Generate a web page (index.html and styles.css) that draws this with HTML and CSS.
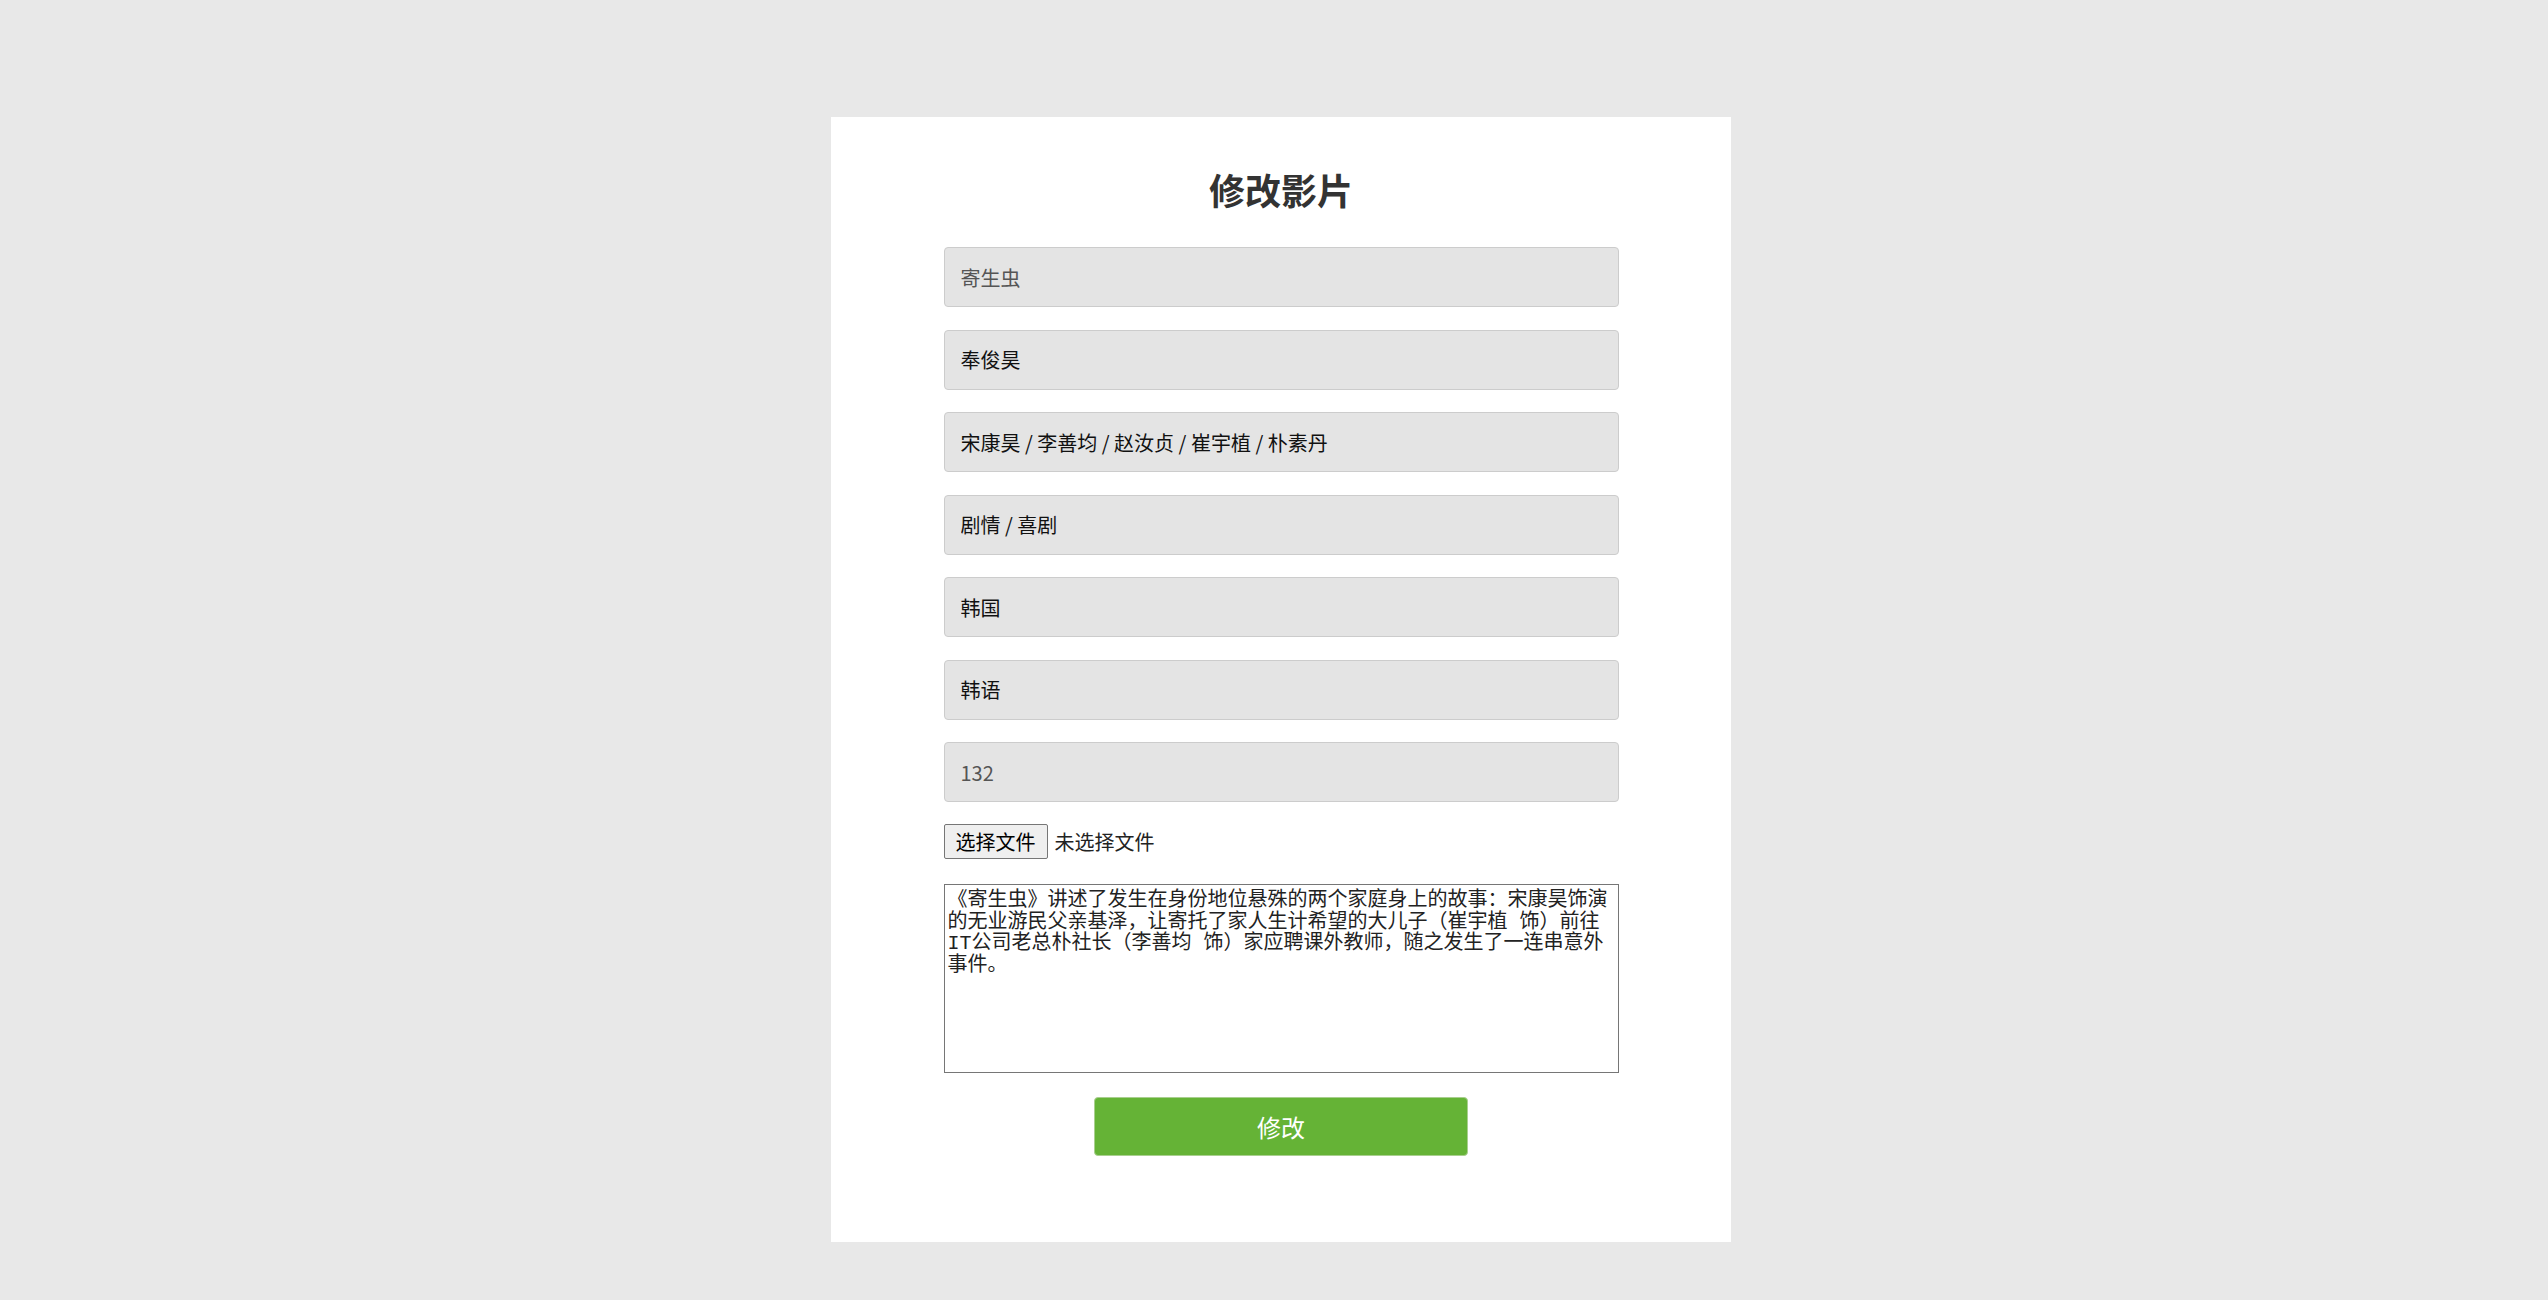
FILE: index.html
```html
<!DOCTYPE html>
<html lang="zh-CN">
<head>
<meta charset="utf-8">
<title>修改影片</title>
<link rel="stylesheet" href="styles.css">
</head>
<body>
<div class="card">
  <h1 class="title">修改影片</h1>
  <form class="form">
    <input class="field muted" type="text" value="寄生虫">
    <input class="field" type="text" value="奉俊昊">
    <input class="field" type="text" value="宋康昊 / 李善均 / 赵汝贞 / 崔宇植 / 朴素丹">
    <input class="field" type="text" value="剧情 / 喜剧">
    <input class="field" type="text" value="韩国">
    <input class="field" type="text" value="韩语">
    <input class="field muted" type="text" value="132">
    <div class="file-row">
      <button class="file-btn" type="button">选择文件</button>
      <span class="file-name">未选择文件</span>
    </div>
    <textarea class="desc">《寄生虫》讲述了发生在身份地位悬殊的两个家庭身上的故事：宋康昊饰演的无业游民父亲基泽，让寄托了家人生计希望的大儿子（崔宇植 饰）前往IT公司老总朴社长（李善均 饰）家应聘课外教师，随之发生了一连串意外事件。</textarea>
    <button class="submit" type="button">修改</button>
  </form>
</div>
</body>
</html>
```

FILE: styles.css
```css
html, body {
  margin: 0;
  padding: 0;
}

body {
  background: #e8e8e8;
  font-family: "Noto Sans CJK SC", "Noto Sans", sans-serif;
  height: 1300px;
  overflow: hidden;
  padding-left: 14px;
  box-sizing: border-box;
}

.card {
  width: 900px;
  height: 1125px;
  box-sizing: border-box;
  margin: 117px auto 0;
  background: #ffffff;
  padding-top: 45px;
}

.title {
  margin: 0 0 31px;
  font-size: 36px;
  line-height: 54px;
  font-weight: 700;
  color: #333333;
  text-align: center;
}

.form {
  width: 675px;
  margin: 0 auto;
  display: flex;
  flex-direction: column;
}

.field {
  display: block;
  width: 100%;
  height: 60px;
  box-sizing: border-box;
  margin: 0 0 22.5px;
  padding: 0 16px;
  border: 1px solid #cccccc;
  border-radius: 4px;
  background: #e4e4e4;
  font-family: "Noto Sans CJK SC", "Noto Sans", sans-serif;
  font-size: 20px;
  color: #111111;
  outline: none;
}

.field.muted {
  color: #555555;
}

.file-row {
  display: flex;
  align-items: center;
  gap: 7px;
  height: 35px;
  margin-top: -0.5px;
}

.file-btn {
  height: 35px;
  box-sizing: border-box;
  padding: 0 11px;
  border: 1px solid #767676;
  border-radius: 2px;
  background: #efefef;
  font-family: "Noto Sans CJK SC", "Noto Sans", sans-serif;
  font-size: 20px;
  line-height: 1;
  color: #000000;
}

.file-name {
  font-size: 20px;
  color: #222222;
}

.desc {
  display: block;
  width: 100%;
  height: 189px;
  box-sizing: border-box;
  margin-top: 25px;
  padding: 5px 3px 3px;
  border: 1px solid #767676;
  border-radius: 0;
  font-family: "Liberation Mono", "Noto Sans CJK SC", monospace;
  font-size: 20px;
  line-height: 21.7px;
  color: #222222;
  background: #ffffff;
  resize: none;
  outline: none;
}

.submit {
  display: block;
  align-self: center;
  width: 374px;
  height: 59px;
  margin-top: 24px;
  border: 1px solid #a9cf8f;
  border-radius: 4px;
  background: #65b336;
  color: #ffffff;
  font-family: "Noto Sans CJK SC", "Noto Sans", sans-serif;
  font-size: 24px;
  line-height: 1;
}
```
